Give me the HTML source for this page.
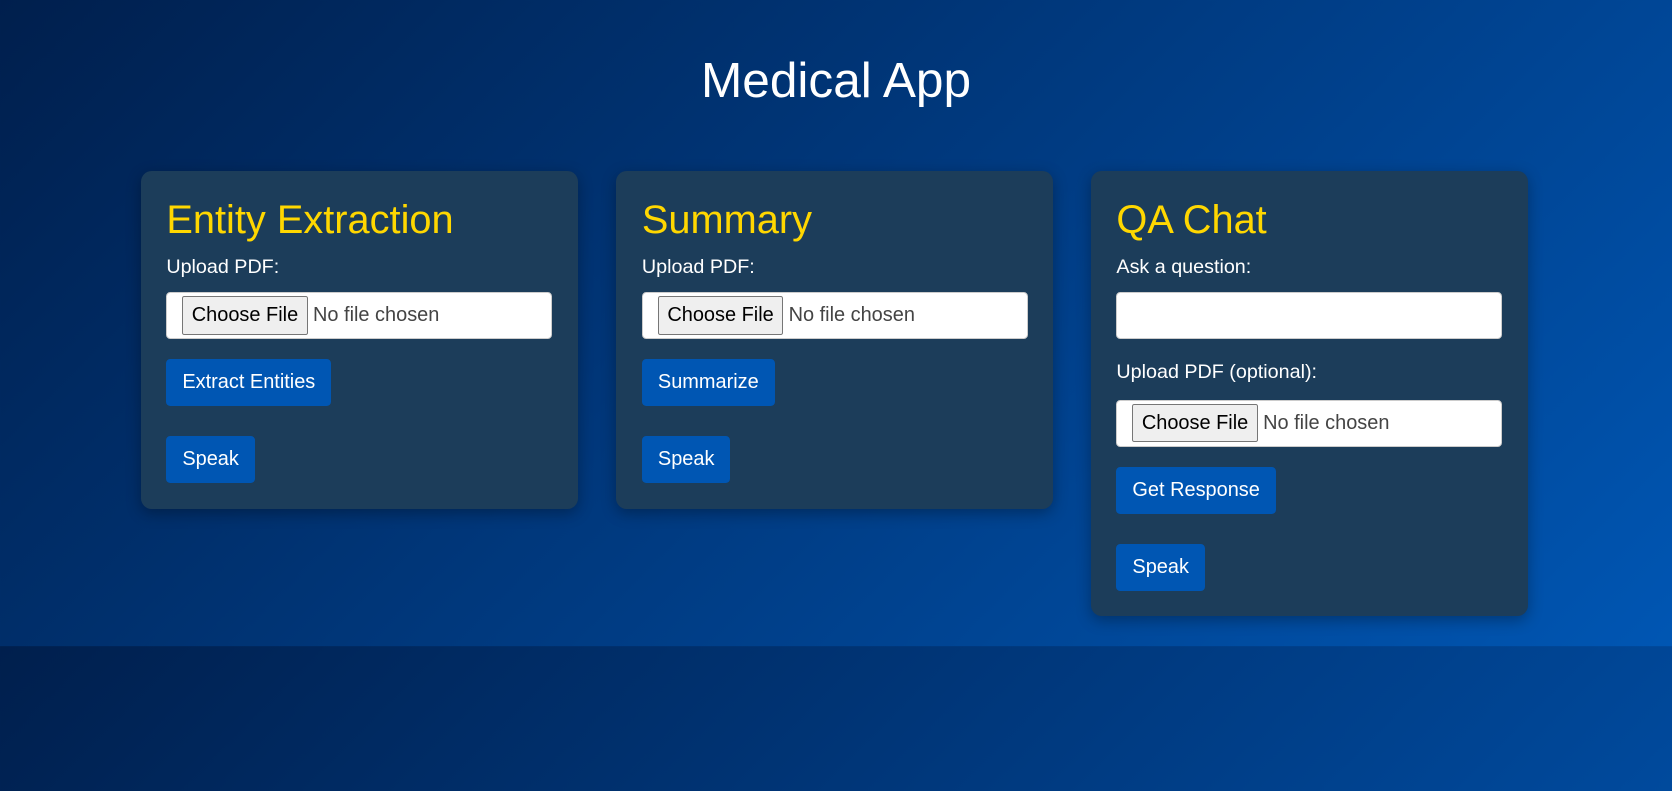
<!DOCTYPE html>
<html><head><meta charset="utf-8"><style>
html{zoom:1.06633;margin:0;height:100%;background:linear-gradient(135deg,#001f4d 0%,#003a80 50%,#0056b3 100%);background-size:1568px 606px;background-repeat:repeat-y}
body{margin:0;font-family:"Liberation Sans",Arial,sans-serif;color:#fff;width:1568px;height:742px;overflow:hidden;position:relative}
h1{position:absolute;left:0;right:0;top:46px;margin:0;text-align:center;font-weight:normal;font-size:46.5px;line-height:60px}
.card{position:absolute;top:160px;width:362px;padding:0 24px 24px;background:#1c3d5a;border-radius:10px;box-shadow:0 4px 14px rgba(0,0,0,.3)}
h2{color:#ffd700;font-weight:normal;font-size:37.3px;line-height:46px;margin:24px 0 10px}
label{display:block;font-size:18.5px;line-height:22px;margin-bottom:12px}
.inp{box-sizing:border-box;height:44px;background:#fff;border:1px solid #ccc;border-radius:4px;padding:0 14px;display:flex;align-items:center;margin-bottom:19px}
.cf{box-sizing:border-box;height:36px;padding:0 8px;background:#efefef;border:1px solid #767676;border-radius:2px;color:#000;font-size:18.7px;line-height:34px}
.nf{color:#444;font-size:18.7px;margin-left:5px}
.btn{display:inline-block;background:#0056b3;color:#fff;font-size:18.7px;height:44px;line-height:44px;padding:0 15px;border-radius:4px}
.sp{display:block;width:max-content;margin-top:28px}
</style></head><body>
<h1>Medical App</h1>
<div class="card" style="left:132px">
<h2>Entity Extraction</h2>
<label>Upload PDF:</label>
<div class="inp"><span class="cf">Choose File</span><span class="nf">No file chosen</span></div>
<span class="btn">Extract Entities</span>
<span class="btn sp">Speak</span>
</div>
<div class="card" style="left:578px">
<h2>Summary</h2>
<label>Upload PDF:</label>
<div class="inp"><span class="cf">Choose File</span><span class="nf">No file chosen</span></div>
<span class="btn">Summarize</span>
<span class="btn sp">Speak</span>
</div>
<div class="card" style="left:1023px">
<h2>QA Chat</h2>
<label>Ask a question:</label>
<div class="inp" style="margin-bottom:21px"></div>
<label style="margin-bottom:14px">Upload PDF (optional):</label>
<div class="inp"><span class="cf">Choose File</span><span class="nf">No file chosen</span></div>
<span class="btn">Get Response</span>
<span class="btn sp">Speak</span>
</div>
</body></html>
